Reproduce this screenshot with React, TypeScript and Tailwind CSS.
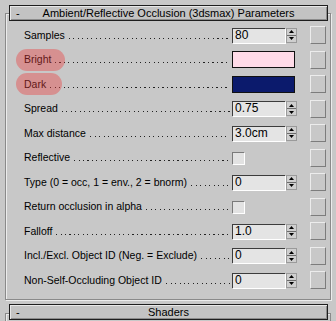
import React from "react";

type Row = {
  label: string;
  kind: "spin" | "color" | "check";
  value?: string;
  color?: string;
  mark?: number;
};

const rows: Row[] = [
  { label: "Samples", kind: "spin", value: "80" },
  { label: "Bright", kind: "color", color: "#ffdbe8", mark: 49 },
  { label: "Dark", kind: "color", color: "#0b1a6c", mark: 46 },
  { label: "Spread", kind: "spin", value: "0.75" },
  { label: "Max distance", kind: "spin", value: "3.0cm" },
  { label: "Reflective", kind: "check" },
  { label: "Type (0 = occ, 1 = env., 2 = bnorm)", kind: "spin", value: "0" },
  { label: "Return occlusion in alpha", kind: "check" },
  { label: "Falloff", kind: "spin", value: "1.0" },
  { label: "Incl./Excl. Object ID (Neg. = Exclude)", kind: "spin", value: "0" },
  { label: "Non-Self-Occluding Object ID", kind: "spin", value: "0" },
];

function RolloutHeader({ title }: { title: string }) {
  return (
    <div className="relative flex items-center h-[16px] w-[319px] ml-[3px] border border-[#1e1e1e] bg-[#c3c3c3] shadow-[inset_1px_1px_0_#e8e8e8,inset_-1px_-1px_0_#8c8c8c]">
      <span className="absolute left-[6px] top-[0px] leading-[14px]">-</span>
      <span className="flex-1 text-center leading-[14px]">{title}</span>
    </div>
  );
}

function Spinner({ value }: { value: string }) {
  return (
    <div className="flex items-center">
      <div className="w-[53px] h-[15px] bg-[#e4e4e4] border-t border-l border-[#3c3c3c] shadow-[1px_1px_0_#ffffff] pl-[2px] leading-[13px] text-[12px]">
        {value}
      </div>
      <div className="ml-[1px] w-[11px] h-[15px] border border-[#9a9a9a] bg-[#cfcfcf] flex flex-col">
        <div className="flex-1 flex items-center justify-center border-b border-[#6c6c6c]">
          <svg width="5" height="3" viewBox="0 0 5 3">
            <path d="M2.5 0 L5 3 L0 3 Z" fill="#000" />
          </svg>
        </div>
        <div className="flex-1 flex items-center justify-center">
          <svg width="5" height="3" viewBox="0 0 5 3">
            <path d="M0 0 L5 0 L2.5 3 Z" fill="#000" />
          </svg>
        </div>
      </div>
    </div>
  );
}

function Control({ row }: { row: Row }) {
  if (row.kind === "spin") return <Spinner value={row.value ?? ""} />;
  if (row.kind === "color")
    return (
      <div
        className="w-[63px] h-[17px] border border-[#111]"
        style={{ backgroundColor: row.color }}
      />
    );
  return (
    <div className="w-[12px] h-[12px] bg-[#e2e2e2] border-t border-l border-[#7a7a7a] shadow-[1px_1px_0_#ffffff]" />
  );
}

export default function App() {
  return (
    <div className="w-[336px] h-[321px] overflow-hidden bg-[#c8c8c8] text-[11px] text-black font-['Liberation_Sans',Arial,sans-serif]">
      {/* Parameters rollout */}
      <div className="mx-[5px] mt-[13px] h-[287px] border border-[#8a8a8a] shadow-[inset_1px_1px_0_#ececec,1px_1px_0_#ececec]">
        <div className="-mt-[9px]">
          <RolloutHeader title="Ambient/Reflective Occlusion (3dsmax) Parameters" />
        </div>
        <div className="mt-[2px]">
          {rows.map((row) => (
            <div key={row.label} className="relative flex items-center h-[24.5px]">
              {row.mark && (
                <div
                  className="absolute left-[10px] top-[1px] h-[22px] rounded-full bg-[rgb(235,60,60)]/40 z-10"
                  style={{ width: row.mark }}
                />
              )}
              <div className="flex items-end w-[226px] pl-[18px] pr-[2px] whitespace-nowrap text-[10.5px] leading-[13px]">
                <span>{row.label}</span>
                <span className="flex-1 h-[1px] mb-[3px] ml-[4px] bg-[repeating-linear-gradient(to_right,#222_0_1px,transparent_1px_4.5px)]" />
              </div>
              <div className="w-[78px] flex items-center">
                <Control row={row} />
              </div>
              <div className="w-[16px] h-[18px] border-t border-l border-[#ececec] border-r border-b border-r-[#7c7c7c] border-b-[#7c7c7c] bg-[#c8c8c8]" />
            </div>
          ))}
        </div>
      </div>

      {/* Shaders rollout */}
      <div className="mx-[5px] mt-[13px] h-[40px] border border-[#8a8a8a] shadow-[inset_1px_1px_0_#ececec]">
        <div className="-mt-[10px]">
          <RolloutHeader title="Shaders" />
        </div>
      </div>
    </div>
  );
}
